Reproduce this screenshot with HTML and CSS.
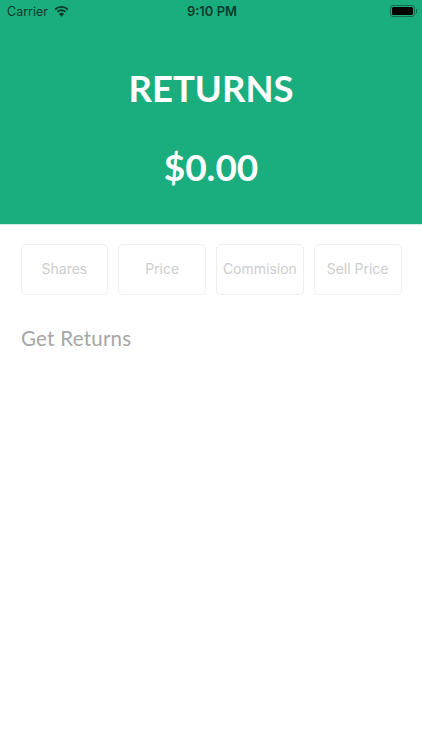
FILE: index.html
```html
<!DOCTYPE html>
<html lang="en">
<head>
    <meta charset="UTF-8">
    <meta name="viewport" content="width=device-width, initial-scale=1.0">
    <title>Returns</title>
    <link rel="stylesheet" href="styles.css">
</head>
<body>
    <div class="header">
        <div class="status">
            <div class="status-left">
                <span>Carrier</span>
                <svg class="wifi" viewBox="0 0 16 12" width="15" height="11">
                    <path d="M8 11.8 L5.2 8.6 A4 4 0 0 1 10.8 8.6 Z" fill="#0c3a2a"/>
                    <path d="M3.5 6.4 A6.6 6.6 0 0 1 12.5 6.4" fill="none" stroke="#0c3a2a" stroke-width="2"/>
                    <path d="M1 3.8 A10.2 10.2 0 0 1 15 3.8" fill="none" stroke="#0c3a2a" stroke-width="2"/>
                </svg>
            </div>
            <div class="status-time">9:10 PM</div>
            <div class="status-right">
                <div class="battery"><div class="battery-fill"></div></div>
                <div class="battery-tip"></div>
            </div>
        </div>
        <h1 class="title">RETURNS</h1>
        <div class="amount">$0.00</div>
    </div>

    <div class="inputs">
        <div class="field">Shares</div>
        <div class="field">Price</div>
        <div class="field">Commision</div>
        <div class="field">Sell Price</div>
    </div>

    <div class="action">Get Returns</div>
</body>
</html>
```

FILE: styles.css
```css
body{
    margin: 0;
    background-color: #fff;
    font-family: "Inter", "Liberation Sans", sans-serif;
}
/* green top block */
.header{
    height: 225px;
    background-color: #1aae7e;
    text-align: center;
    color: #fff;
    box-sizing: border-box;
    border-bottom: 1px solid #c9f2e4;
}
.status{
    height: 22px;
    display: grid;
    grid-template-columns: 1fr auto 1fr;
    align-items: center;
    padding: 0 5px 0 7px;
    font-family: "Inter", "Liberation Sans", sans-serif;
    font-size: 12.5px;
    color: #0c3a2a;
}
.status-left{
    display: flex;
    align-items: center;
    gap: 6px;
}
.status-time{
    font-weight: 600;
    font-size: 13px;
}
.status-right{
    display: flex;
    justify-content: flex-end;
    align-items: center;
}
.battery{
    width: 21px;
    height: 8px;
    border: 1px solid #0f6a4e;
    border-radius: 3px;
    padding: 1px;
}
.battery-fill{
    height: 100%;
    background-color: #000;
    border-radius: 1.5px;
}
.battery-tip{
    width: 1.5px;
    height: 4px;
    margin-left: 1px;
    background-color: #0f6a4e;
}
.title{
    margin: 43px 0 0;
    font-size: 36.5px;
    line-height: 46px;
    font-weight: 700;
    font-family: "Lato", "Liberation Sans", sans-serif;
}
.amount{
    margin-top: 33px;
    font-size: 37px;
    line-height: 46px;
    font-weight: 700;
    font-family: "Lato", "Liberation Sans", sans-serif;
}
.inputs{
    display: grid;
    grid-template-columns: repeat(4, 1fr);
    gap: 10px;
    padding: 19px 20.5px 0;
}
.field{
    height: 51px;
    box-sizing: border-box;
    border: 1px solid #efefef;
    border-radius: 5px;
    padding-bottom: 2px;
    display: flex;
    align-items: center;
    justify-content: center;
    font-size: 14px;
    color: #cdcdcd;
    white-space: nowrap;
}
.action{
    margin: 30px 0 0 21px;
    font-family: "Lato", "Liberation Sans", sans-serif;
    font-size: 20.5px;
    line-height: 26px;
    letter-spacing: 0.25px;
    color: #a6a6a6;
}
```
